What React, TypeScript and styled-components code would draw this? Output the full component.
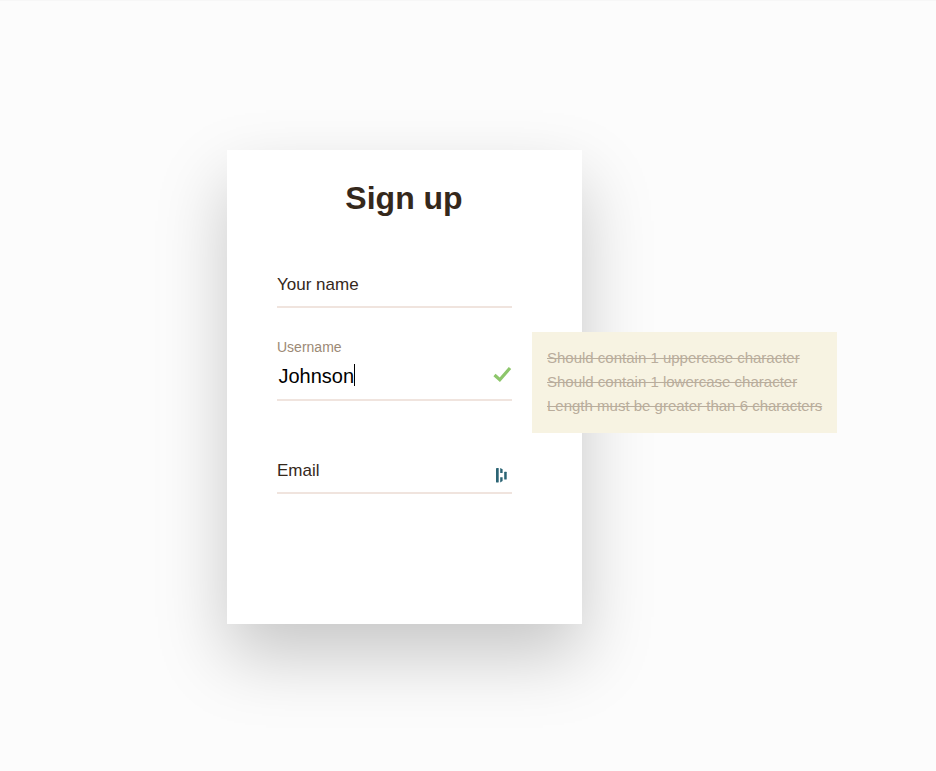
import React from 'react';
import styled, { createGlobalStyle } from 'styled-components';

const GlobalStyle = createGlobalStyle`
  * { box-sizing: border-box; }
  body {
    margin: 0;
    background: #fcfcfc;
    font-family: "Liberation Sans", Arial, sans-serif;
    color: #35281b;
    overflow: hidden;
  }
`;

const Page = styled.main`
  height: 771px;
  padding: 149px 0 0 227px;
  border-top: 1px solid #f7f7f7;
`;

const Card = styled.form`
  width: 355px;
  height: 474px;
  padding: 30px 70px 0 50px;
  background: #fff;
  box-shadow: 0 32px 66px rgba(0, 0, 0, 0.21);
`;

const Title = styled.h1`
  margin: 0 -19px 0 0;
  height: 35px;
  font-size: 32px;
  line-height: 36px;
  font-weight: 700;
  text-align: center;
`;

const Field = styled.div`
  position: relative;
  height: 93px;
  display: flex;
  flex-direction: column;
  justify-content: flex-end;
  border-bottom: 2px solid #f0e4de;
`;

const Label = styled.label<{ $floating?: boolean }>`
  font-size: ${p => (p.$floating ? 14 : 17)}px;
  line-height: 20px;
  color: ${p => (p.$floating ? '#9c8975' : '#35281b')};
  margin-bottom: ${p => (p.$floating ? 5 : 11)}px;
`;

const InputRow = styled.div`
  display: flex;
  align-items: center;
  height: 26px;
  margin-bottom: 11px;
  padding-left: 1.5px;
  font-size: 20px;
  line-height: 26px;
  color: #000;
`;

const InputValue = styled.span`
  padding-top: 1px;
`;

const Caret = styled.span`
  width: 1px;
  height: 22px;
  background: #000;
`;

const Check = styled.svg`
  width: 19px;
  height: 17px;
  margin: 0 0 2px auto;
`;

const EmailRow = styled.div`
  display: flex;
  justify-content: space-between;
  align-items: flex-end;
`;

const ManagerIcon = styled.svg`
  width: 12px;
  height: 16px;
  margin: 0 4px 9px 0;
`;

const Rules = styled.ul`
  position: absolute;
  left: 255px;
  top: 24px;
  width: 305px;
  height: 101px;
  margin: 0;
  padding: 14px 15px;
  list-style: none;
  background: #f7f3e2;
`;

const Rule = styled.li`
  font-size: 15px;
  line-height: 24px;
  height: 24px;
  color: #b9ad9c;
  white-space: nowrap;
  text-decoration: line-through;
  text-decoration-thickness: 1px;
`;

const rules = [
  'Should contain 1 uppercase character',
  'Should contain 1 lowercase character',
  'Length must be greater than 6 characters',
];

export default function App() {
  return (
    <>
      <GlobalStyle />
      <Page>
        <Card>
          <Title>Sign up</Title>
          <Field>
            <Label>Your name</Label>
          </Field>
          <Field>
            <Label $floating>Username</Label>
            <InputRow>
              <InputValue>Johnson</InputValue>
              <Caret />
              <Check viewBox="0 0 19 17">
                <path d="M1.5 9 6.8 13.8 17 2" fill="none" stroke="#8dc66b" strokeWidth="3.2" />
              </Check>
            </InputRow>
            <Rules>
              {rules.map(rule => <Rule key={rule}>{rule}</Rule>)}
            </Rules>
          </Field>
          <Field>
            <EmailRow>
              <Label>Email</Label>
              <ManagerIcon viewBox="0 0 12 16" fill="#2b6474">
                <rect x="0" y="1" width="2.7" height="14.5" rx=".4" />
                <path d="M4.2 1 6.6 2.2V6H4.2zM4.2 10.2H6.6V14L4.2 15.5z" />
                <rect x="8.2" y="4.8" width="2.5" height="7.7" rx=".5" />
              </ManagerIcon>
            </EmailRow>
          </Field>
        </Card>
      </Page>
    </>
  );
}
